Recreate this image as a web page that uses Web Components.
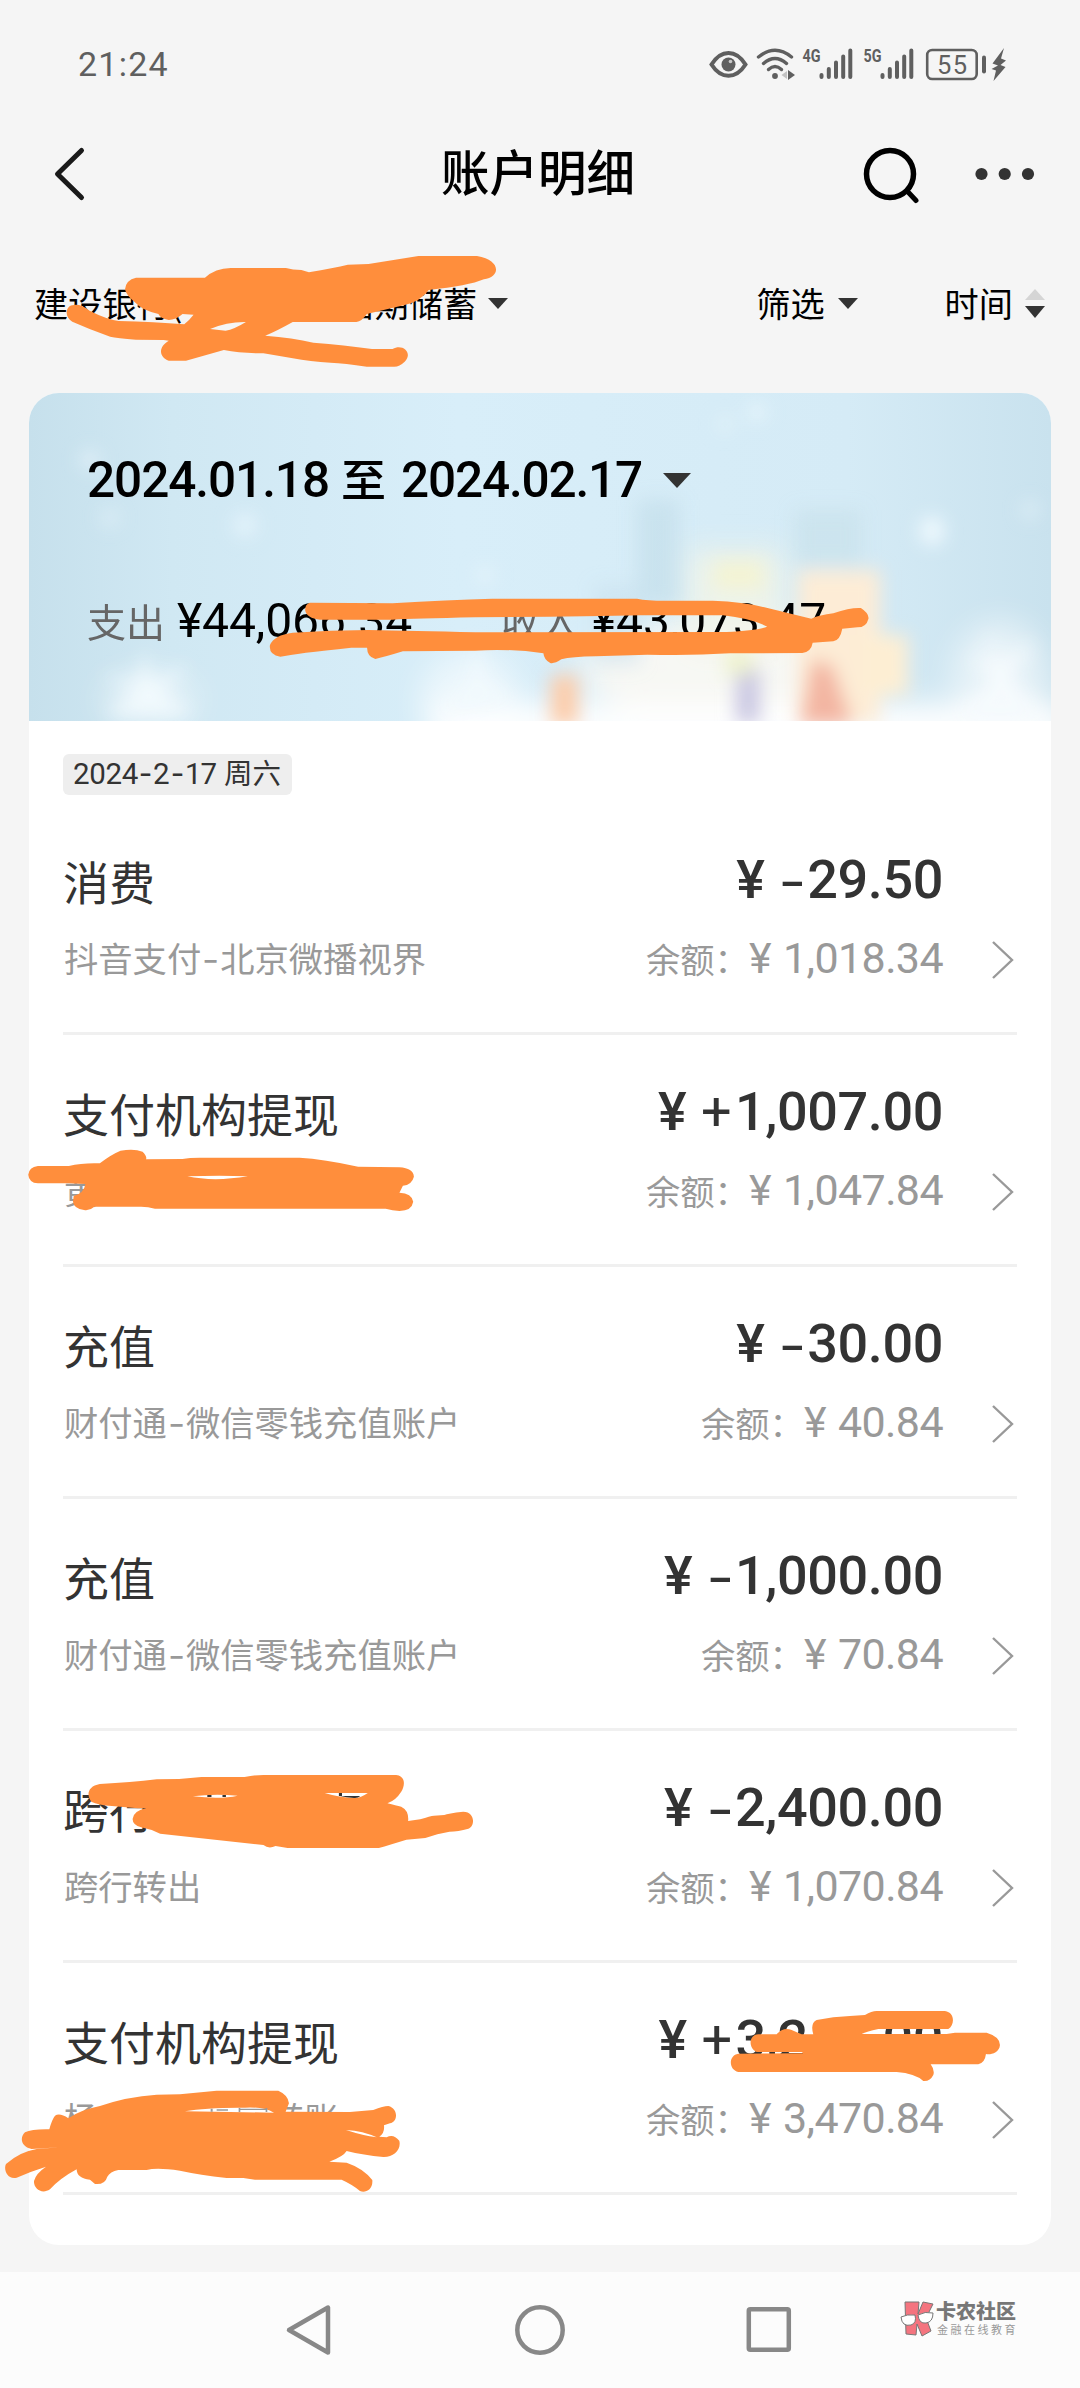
<!DOCTYPE html>
<html lang="zh-CN">
<head>
<meta charset="utf-8">
<title>账户明细</title>
<style>
html,body{margin:0;padding:0}
body{width:1080px;height:2388px;background:#f5f5f5;overflow:hidden;font-family:Roboto,"Noto Sans CJK SC",sans-serif;color:#000}
</style>
</head>
<body>
<account-page></account-page>
<script>
const define = (name, html, setup) => customElements.define(name, class extends HTMLElement {
  constructor() {
    super();
    this.attachShadow({mode: 'open'});
  }
  connectedCallback() {
    this.shadowRoot.innerHTML = typeof html === 'function' ? html(this) : html;
    if (setup) setup(this);
  }
});

// Text run whose letter spacing is tuned so that it occupies the width in "w".
define('fit-text', `<style>:host{display:inline-block;white-space:pre}span{display:inline-block}</style><span><slot></slot></span>`, el => {
  const w = parseFloat(el.getAttribute('w'));
  const span = el.shadowRoot.querySelector('span');
  const n = [...el.textContent].length;
  const natural = span.getBoundingClientRect().width;
  if (w && natural) { span.style.letterSpacing = ((w - natural) / n) + 'px'; el.style.width = w + 'px'; }
});

define('down-caret', `<style>:host{display:block;width:var(--w,20px);height:var(--h,11px)}svg{display:block;width:100%;height:100%}</style>
<svg viewBox="0 0 20 11" preserveAspectRatio="none"><path d="M0 0H20L10 11Z" fill="#333"/></svg>`);

define('status-bar', `
<style>
:host{display:flex;height:126px;box-sizing:border-box;padding:44px 74px 0 78px;justify-content:space-between;align-items:flex-start;color:#5f5f5f}
.time{font-size:34px;line-height:40px}
svg{display:block;margin-top:-14px}
text{font-family:Roboto,sans-serif;fill:#5f5f5f}
</style>
<fit-text class="time" w="91">21:24</fit-text>
<svg width="300" height="70" viewBox="707 30 300 70">
  <path d="M712.500 64.500C722 49 737 49 746.500 64.500C737 79.500 722 79.500 712.500 64.500Z" fill="none" stroke="#5f5f5f" stroke-width="4"/>
  <circle cx="729.500" cy="64.500" r="7" fill="#5f5f5f"/><circle cx="731.500" cy="61.500" r="1.800" fill="#c8c8c8"/>
  <g fill="none" stroke="#5f5f5f" stroke-width="3.400" stroke-linecap="round">
    <path d="M759.500 57Q776 43.500 792.500 57"/><path d="M764.500 63.500Q776 53.500 787.500 63.500"/><path d="M769.500 69.500Q776 63.500 782.500 69.500"/>
  </g>
  <circle cx="776" cy="76" r="2.900" fill="#5f5f5f"/>
  <path d="M789 70V80L796 75Z" fill="#5f5f5f"/><path d="M788 71V79L782.500 75Z" fill="#c2c2c2"/>
  <text x="803.500" y="62" font-size="18" font-weight="700" textLength="18" lengthAdjust="spacingAndGlyphs">4G</text>
  <text x="864.500" y="62" font-size="18" font-weight="700" textLength="18" lengthAdjust="spacingAndGlyphs">5G</text>
  <g stroke="#5f5f5f" stroke-width="4" stroke-linecap="round">
    <path d="M822.500 75V77M829.800 69V77M837 62.500V77M844.200 56.500V77M851.300 50.500V77"/>
    <path d="M883.500 75V77M890.800 69V77M898 62.500V77M905.200 56.500V77M912.300 50.500V77"/>
  </g>
  <rect x="928.200" y="50" width="49.500" height="29" rx="5" fill="none" stroke="#5f5f5f" stroke-width="2.600"/>
  <text x="938" y="73.500" font-size="25.500" textLength="30">55</text>
  <path d="M985 57.500V71.500" stroke="#5f5f5f" stroke-width="4" stroke-linecap="round"/>
  <path d="M1005 48L993.500 63.500L999 65.500L992.500 69L997 70.500L994.500 81L1006.500 67L1001.500 65L1007 60.500L1002 58.500Z" fill="#5f5f5f"/>
</svg>`);

define('title-bar', `
<style>
:host{display:grid;grid-template-columns:1fr auto 1fr;height:96px;align-items:center;padding:0 50px 0 52px}
h1{margin:0;font:500 48.500px/60px "Noto Sans CJK SC",sans-serif;width:194px;white-space:nowrap;margin-top:-9px;position:relative;left:-3px}
svg{display:block}.r{display:flex;justify-content:flex-end;gap:52px;align-items:center;margin-right:-5px}
</style>
<svg width="34" height="60" viewBox="52 144 34 60"><path d="M81.500 150.500L57.500 174L81.500 197.500" fill="none" stroke="#1a1a1a" stroke-width="5" stroke-linecap="round" stroke-linejoin="round"/></svg>
<h1>账户明细</h1>
<div class="r">
<svg width="60" height="60" viewBox="861 144 60 60"><circle cx="890" cy="174" r="23.500" fill="none" stroke="#000" stroke-width="5.500"/><path d="M908.500 192.500L916 200.500" stroke="#000" stroke-width="5" stroke-linecap="round"/></svg>
<svg width="62" height="60" viewBox="973 144 62 60" fill="#333"><circle cx="981.500" cy="174" r="6.100"/><circle cx="1004.700" cy="174" r="6.100"/><circle cx="1028" cy="174" r="6.100"/></svg>
</div>`);

define('filter-bar', `
<style>
:host{display:flex;height:171px;padding:55px 35px 0 34px;box-sizing:border-box;font:400 34.200px/50px "Noto Sans CJK SC",sans-serif}
div{display:flex;align-items:center;height:50px;white-space:nowrap}
.acct{flex:1}.gap{width:158px}.acct down-caret{margin-left:11px}
down-caret,svg{position:relative;top:1px}
.filter{margin-right:87px}.filter down-caret{margin-left:13px}
svg{margin-left:12px}
</style>
<div class="acct">建设银行(<span class="gap"></span>活期储蓄<down-caret></down-caret></div>
<div class="filter">筛选<down-caret></down-caret></div>
<div>时间<svg width="20" height="29" viewBox="0 0 20 29"><path d="M0 11H20L10 0Z" fill="#d5d5d5"/><path d="M0 17H20L10 29Z" fill="#333"/></svg></div>`);

define('summary-banner', `
<style>
:host{display:grid;height:328px;border-radius:30px 30px 0 0;overflow:hidden}
.bg,.c{grid-area:1/1}.bg{display:block}
.c{z-index:1;padding:57px 60px 0 58px;display:flex;flex-direction:column;gap:80px}
.date{display:flex;align-items:center;font-size:49.500px;line-height:60px;font-weight:500;height:60px}
.date b{font:500 45px/60px "Noto Sans CJK SC",sans-serif;margin:-4px 15px 0 12px;width:45px}
.date down-caret{--w:28px;--h:15px;margin-left:21px}
.sum{display:flex;align-items:baseline;font-size:48px;line-height:60px}
.sum i{font:400 39px/60px "Noto Sans CJK SC",sans-serif;color:#666;width:78px;margin-right:12px}
.sum i+fit-text+i{margin-left:89px}
</style>
<svg class="bg" width="1022" height="328" viewBox="29 393 1022 328">
  <defs>
    <linearGradient id="h"><stop offset="0" stop-color="#c6e0ec"/><stop offset=".14" stop-color="#d0e8f3"/><stop offset=".42" stop-color="#d8eef9"/><stop offset=".8" stop-color="#d5ebf6"/><stop offset="1" stop-color="#c9e2ee"/></linearGradient>
    <filter id="b6" x="-60%" y="-60%" width="220%" height="220%"><feGaussianBlur stdDeviation="9"/></filter>
    <filter id="b14" x="-60%" y="-60%" width="220%" height="220%"><feGaussianBlur stdDeviation="15"/></filter>
  </defs>
  <rect x="29" y="393" width="1022" height="328" fill="url(#h)"/>
  <g filter="url(#b14)">
    <ellipse cx="150" cy="700" rx="50" ry="30" fill="#fff" opacity=".35"/>
    <ellipse cx="470" cy="700" rx="50" ry="50" fill="#fff" opacity=".5"/>
    <ellipse cx="730" cy="670" rx="150" ry="50" fill="#fffaf2" opacity=".8"/>
    <ellipse cx="1000" cy="680" rx="50" ry="60" fill="#fff" opacity=".5"/>
    <rect x="430" y="705" width="640" height="40" fill="#fff"/>
    <rect x="685" y="550" width="100" height="100" fill="#f3f5e8" opacity=".8"/>
  </g>
  <g filter="url(#b6)">
    <rect x="637" y="500" width="42" height="105" fill="#bfdbe7" opacity=".55"/>
    <rect x="795" y="510" width="66" height="55" fill="#c3dde8" opacity=".5"/>
    <rect x="595" y="585" width="45" height="80" fill="#c6deea" opacity=".45"/>
    <rect x="714" y="560" width="50" height="30" fill="#f7f5c8" opacity=".65"/>
    <rect x="798" y="570" width="82" height="153" fill="#fdecd6"/>
    <rect x="860" y="635" width="48" height="60" fill="#fdeed3"/>
    <path d="M800 725L812 660L832 665L853 725Z" fill="#f3b5a2"/>
    <rect x="551" y="675" width="27" height="50" fill="#fcccaa"/>
    <rect x="736" y="668" width="24" height="55" fill="#cac8e2"/>
    <rect x="725" y="650" width="28" height="25" fill="#edf2c5" opacity=".8"/>
    <ellipse cx="932" cy="531" rx="13" ry="15" fill="#edf8fd"/>
    <path d="M145 650L151 682L190 665L162 692L195 715H105L136 692L100 674L137 682Z" fill="#f1f9fd"/>
    <path d="M478 640L485 682L512 700L440 715L468 682Z" fill="#f1f9fd"/>
    <path d="M985 630L1003 660L1035 640L1012 675L1040 720H955L990 680L968 655L994 662Z" fill="#f5fafd"/>
    <circle cx="90" cy="460" r="9" fill="#e5f3fa"/><circle cx="245" cy="525" r="12" fill="#e3f3fb"/><circle cx="485" cy="575" r="9" fill="#e5f4fb"/><circle cx="757" cy="412" r="9" fill="#e8f6fc"/><circle cx="725" cy="424" r="7" fill="#e6f5f9"/><circle cx="110" cy="518" r="8" fill="#e1f1f8"/><circle cx="1030" cy="510" r="8" fill="#e1f0f7"/>
  </g>
</svg>
<div class="c">
  <div class="date"><fit-text w="242">2024.01.18</fit-text><b>至</b><fit-text w="241">2024.02.17</fit-text><down-caret></down-caret></div>
  <div class="sum"><i>支出</i><fit-text w="235">¥44,066.34</fit-text><i>收入</i><fit-text w="235">¥43,073.47</fit-text></div>
</div>`);

define('day-tag', `
<style>:host{display:flex;align-items:center;width:229px;height:41px;box-sizing:border-box;padding-left:10px;margin:33px 0 8px 34px;border-radius:6px;background:#eee;color:#333;font-size:29.500px;line-height:41px;white-space:nowrap}
.d{font-family:Inter;font-weight:400;display:inline-block;width:15px;text-align:center;margin-top:-3px}
fit-text{margin-top:-1px}
.w{font:400 28.500px/41px "Noto Sans CJK SC",sans-serif;margin:-6px 0 0 8px}</style>
<fit-text w="65">2024</fit-text><span class="d">-</span><fit-text w="17">2</fit-text><span class="d">-</span><fit-text w="31">17</fit-text><span class="w">周六</span>`);

// "_40_" inside a value leaves an empty run 40px wide.
const cut = s => s.replace(/_(\d+)_/g, '<span style="display:inline-block;width:$1px"></span>');
define('record-row', el => {
  const amt = el.getAttribute('amount'), sign = amt[0], num = amt.slice(1);
  return `
<style>
:host{display:flex;justify-content:space-between;height:232px;box-sizing:border-box;margin:0 34px;border-bottom:3px solid #f0f0f0;color:#333}
.l{padding-top:51px;white-space:nowrap}
.t{font:400 46px/52px "Noto Sans CJK SC",sans-serif;height:52px}
.s{font:400 34.300px/40px "Noto Sans CJK SC",sans-serif;height:40px;color:#999;margin:31px 0 0 1px}
.s em{font:400 34px/40px Inter;display:inline-block;width:19px;text-align:center;transform:scaleX(1.100)}
.r{display:flex;padding-top:51px}
.n{display:flex;flex-direction:column;align-items:flex-end}
.a{display:flex;font-size:54px;line-height:52px;font-weight:500;letter-spacing:-.4px;height:52px;white-space:nowrap}
.a .y,.b .y{display:inline-block}
.a .y{width:31px;margin-right:12px}
.a .m{font-family:Inter;font-weight:500;font-size:46px;width:28px;text-align:center;transform:translateX(-1px) scaleX(1.300);margin-top:1px}
.a .p{font-weight:400;width:34px}
.b{display:flex;align-items:baseline;font-size:43px;line-height:40px;margin-top:32px;color:#999;letter-spacing:-.6px;white-space:nowrap}
.b i{font:400 34.300px/40px "Noto Sans CJK SC",sans-serif;letter-spacing:0;width:103px}
.b .y{width:24px;margin-right:10px}
svg{margin:86px 2px 0 48px}
</style>
<div class="l"><div class="t">${cut(el.getAttribute('name'))}</div><div class="s">${cut(el.getAttribute('note')).replace(/-(?![^<]*>)/, '<em>-</em>')}</div></div>
<div class="r"><div class="n">
<div class="a"><span class="y">¥</span><span class="${sign === '-' ? 'm' : 'p'}">${sign}</span><span>${cut(num)}</span></div>
<div class="b"><i>余额：</i><span class="y">¥</span><span>${el.getAttribute('balance')}</span></div>
</div><svg width="24" height="40" viewBox="0 0 24 40"><path d="M2 2L21 20L2 38" fill="none" stroke="#999" stroke-width="2.400"/></svg></div>`;
});

define('statement-card', `
<style>:host{display:block;margin:0 29px;height:1852px;background:#fff;border-radius:30px}</style>
<summary-banner></summary-banner>
<day-tag></day-tag>
<slot></slot>`);

define('nav-bar', `
<style>
:host{display:flex;margin-top:27px;height:116px;background:#fcfcfc;align-items:flex-start;padding-left:284px}
svg{display:block;margin-top:29px}
.o{margin-left:178px}.q{margin-left:174px}
.logo{margin:26px 0 0 105px}
.w{display:flex;flex-direction:column;margin:26px 0 0 1px;white-space:nowrap}
.w b{font:900 20px/26px "Noto Sans CJK SC",sans-serif;color:#777;height:24px}
.w span{font:400 11px/14px "Noto Sans CJK SC",sans-serif;letter-spacing:2.500px;color:#999;margin-left:1px}
</style>
<svg width="50" height="58" viewBox="284 2301 50 58"><path d="M328 2307.500V2352.500L289 2330Z" fill="none" stroke="#888" stroke-width="4.500" stroke-linejoin="round"/></svg>
<svg class="o" width="56" height="58" viewBox="512 2301 56 58"><circle cx="540" cy="2330" r="22.700" fill="none" stroke="#888" stroke-width="4.500"/></svg>
<svg class="q" width="52" height="58" viewBox="742 2301 52 58"><rect x="748.800" y="2309.300" width="40" height="40.500" rx="1.500" fill="none" stroke="#888" stroke-width="4.500"/></svg>
<svg class="logo" width="36" height="40" viewBox="899 2298 36 40">
  <path d="M905 2302L919 2302L918 2314L923 2302L933 2304L926 2318L931 2331L922 2336L917 2324L916 2335L906 2334Z" fill="#f4747f" stroke="#777" stroke-width="1"/>
  <g fill="#fff" stroke="#777" stroke-width="1"><path d="M901 2317Q907 2314 915 2315Q917 2323 911 2325Q902 2327 901 2317Z"/><path d="M918 2315Q925 2311 933 2313Q933 2322 926 2323Q919 2324 918 2315Z"/></g>
</svg>
<div class="w"><b>卡农社区</b><span>金融在线教育</span></div>`);

// Orange brush marks lying over the page content.
define('brush-marks', `
<style>:host{position:absolute;left:0;top:0;z-index:5;width:1080px;height:2388px;pointer-events:none}svg{display:block}</style>
<svg width="1080" height="2388" viewBox="0 0 1080 2388" fill="#ff8e3c" fill-rule="evenodd">
<g transform="translate(0 240) scale(.3444 .3333)"><path d="M395 113L595 113Q625 85 670 84L830 84Q850 90 875 90L897 97Q970 84 1010 74L1070 72L1215 48L1385 48C1455 60 1455 110 1405 118Q1360 138 1245 150Q1220 185 1175 195L1065 222Q1050 245 1035 246L850 246Q800 275 770 287Q850 293 910 308Q1000 315 1080 327L1140 327C1170 310 1200 340 1175 365Q1160 380 1145 380L1065 380Q1000 370 960 368Q900 365 850 355L765 340Q700 340 650 330L540 362L490 362C460 350 460 320 490 302L475 300L395 299Q340 295 320 290Q260 268 210 245C185 230 190 195 215 195Q235 192 260 212Q310 238 345 243Q450 245 535 253Q550 240 562 224L530 222Q510 240 490 240Q465 235 460 222Q410 210 395 190Q365 165 363 148Q365 120 395 113ZM610 267Q660 245 714 246Q680 268 655 272Z"/></g>
<g transform="translate(0 380) scale(.6887 .3333)"><path d="M450 668L570 670Q650 660 715 656L925 656Q940 662 965 662L1035 662Q1080 665 1110 682L1178 716Q1190 705 1210 700Q1235 682 1250 684Q1262 700 1261 716Q1258 742 1245 742L1223 746Q1220 780 1210 784L1180 788Q1178 815 1165 819L1060 820Q1000 828 940 824L865 829Q830 830 815 838Q805 852 799 849Q790 840 789 820Q740 805 690 812L585 814Q560 830 545 837Q533 830 533 803L510 803Q430 820 407 830Q390 825 392 795Q398 765 425 758Q480 750 535 750Q600 752 690 757L1055 756Q1100 752 1114 740Q1090 715 1050 706L930 706Q850 710 690 712Q600 716 570 719L465 719Q445 715 443 690Q443 672 450 668Z"/></g>
<g transform="translate(0 1060) scale(.6887 .3333)"><path d="M55 318L100 318Q120 308 145 310Q160 285 175 272Q195 265 207 275Q214 290 212 298L265 297Q275 293 290 293L435 293Q470 297 520 320L580 322Q600 325 601 350Q598 375 585 377L580 398Q598 400 600 425Q598 452 580 453Q570 452 560 446L225 446Q215 440 205 440L137 440Q130 453 122 450Q107 445 106 425L107 408Q122 400 124 372L100 370L55 370Q42 368 41 344Q42 322 55 318ZM272 349Q320 346 360 349Q310 366 272 349Z"/></g>
<g transform="translate(0 1740) scale(.3444 .3333)"><path d="M290 132Q380 128 455 118L520 117L585 111L710 111Q740 105 765 105L1150 105C1180 108 1175 140 1165 155Q1150 180 1125 190Q1150 197 1165 200Q1188 212 1185 243L1220 238Q1250 228 1260 227L1290 225Q1300 220 1345 215C1380 215 1380 260 1360 266Q1330 275 1305 275L1270 283L1235 294L1180 299Q1130 315 1100 324L835 324L800 318Q780 328 765 315L465 281Q440 268 410 262Q385 255 385 237Q388 212 425 205L400 205L325 198Q285 195 265 185C250 165 255 138 290 132ZM560 169Q620 160 690 167Q640 178 560 169ZM943 159L1068 159Q1045 175 1030 174Q985 172 943 159Z"/><path d="M602 165h12v6h-12zM646 165h10v6h-10zM984 159h9v9h-9zM988 168L1046 168Q1040 175 1028 174Q1005 173 988 168Z" fill="#333"/></g>
<g transform="translate(0 2050) scale(.3333)"><path d="M165 197Q180 188 205 205Q240 180 300 168Q380 140 470 134L540 133L650 122L835 122Q865 135 867 160L857 185L1050 186L1120 180Q1150 168 1165 168C1195 175 1195 215 1170 220L1152 226Q1155 250 1138 260L1160 262Q1180 250 1198 272C1205 300 1180 322 1150 321Q1090 315 1040 303Q1030 320 988 335L1040 338Q1090 355 1117 390C1120 420 1095 430 1080 423Q1060 405 1025 389L765 389L730 384L680 384Q600 375 540 362Q470 352 440 360L355 360Q330 365 322 380Q315 405 285 402L270 389Q230 385 230 358Q180 385 150 418C125 435 100 415 102 393Q108 370 138 350Q90 365 50 383C20 390 10 355 18 342Q60 305 110 297L180 292L95 297C60 290 60 260 75 247Q95 237 148 238Q155 210 165 197ZM555 184Q620 172 735 173Q790 170 822 188L690 186ZM1038 240Q1090 243 1130 262Q1090 257 1038 240Z"/><path d="M632 176h6v9h-6zM650 178h34v4h-34zM716 174h5v12h-5zM721 176h76v4h-76zM797 174h5v12h-5z" fill="#999"/></g>
<g transform="translate(620 1980) scale(.3333)"><path d="M415 163L470 163Q490 140 515 150L545 163L580 163Q570 130 590 120Q640 110 690 108L735 105Q755 93 770 93L975 93C1005 97 1005 135 985 147L775 147Q740 155 725 162L980 162L1005 158L1100 158Q1140 170 1140 195C1138 220 1110 225 1098 222Q1095 248 1075 253L932 253Q945 270 940 285Q930 305 910 303Q885 280 830 276L355 276C325 270 325 225 355 221L550 220L545 216L410 216C385 205 385 165 415 163Z"/></g>
</svg>`);

define('account-page', `
<style>:host{display:block;width:1080px;height:2388px;position:relative;overflow:hidden;background:#f5f5f5}</style>
<status-bar></status-bar>
<title-bar></title-bar>
<filter-bar></filter-bar>
<statement-card>
  <record-row name="消费" note="抖音支付-北京微播视界" amount="-29.50" balance="1,018.34"></record-row>
  <record-row name="支付机构提现" note="黄" amount="+1,007.00" balance="1,047.84"></record-row>
  <record-row name="充值" note="财付通-微信零钱充值账户" amount="-30.00" balance="40.84"></record-row>
  <record-row name="充值" note="财付通-微信零钱充值账户" amount="-1,000.00" balance="70.84"></record-row>
  <record-row name="跨行" note="跨行转出" amount="-2,400.00" balance="1,070.84"></record-row>
  <record-row name="支付机构提现" note="杨_172_转账" amount="+3,2_60_.00" balance="3,470.84"></record-row>
</statement-card>
<nav-bar></nav-bar>
<brush-marks></brush-marks>`);
</script>
</body>
</html>
